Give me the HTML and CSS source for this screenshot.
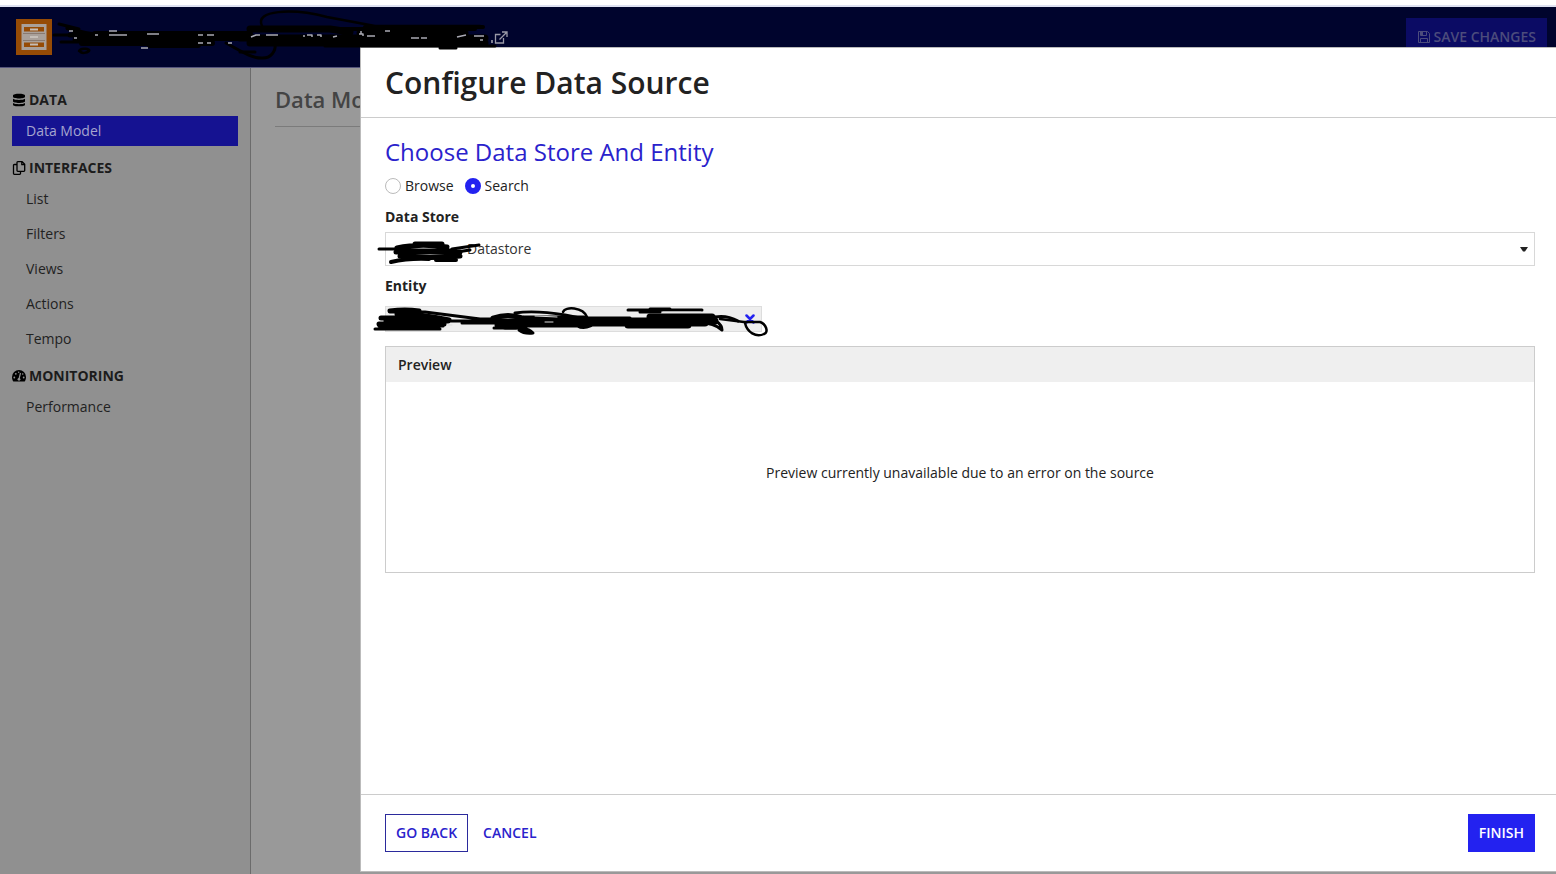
FILE: index.html
```html
<!DOCTYPE html>
<html lang="en">
<head>
<meta charset="utf-8">
<title>Configure Data Source</title>
<link rel="stylesheet" href="styles.css">
</head>
<body>
<div class="page">
  <header class="topbar">
    <svg class="logo" viewBox="0 0 36 36" aria-hidden="true">
      <rect width="36" height="36" fill="#964b05"/>
      <rect x="5.500" y="5" width="25" height="26" fill="#a9a09a"/>
      <path d="M8 8h20v4.500H8zM8 23.500h20V28H8z" fill="#964b05"/>
      <path d="M7 14.500h22M7 21.500h22" stroke="#8a7a70" stroke-width="1"/>
      <path d="M14 10.500h8M14 18h8M14 25.500h8" stroke="#c5beb8" stroke-width="2"/>
    </svg>
    <a class="open-link" href="#" aria-label="Open in new tab">
      <svg viewBox="0 0 14 14" width="14" height="14" fill="none" stroke="currentColor" stroke-width="1.300"><path d="M6.500 4.500H1.500v8.500h8V8M8 2h5v5M13 2L5.500 9.500"/></svg>
    </a>
    <button class="save" type="button">
      <svg viewBox="0 0 12 12" width="12" height="12" fill="none" stroke="currentColor"><path d="M.5.5h9l2 2v9H.5zM2.500.5v4h6v-4M2.500 11.500v-4h7v4"/><path d="M3 1h2v3H3z" fill="currentColor" stroke="none"/></svg>
      SAVE CHANGES
    </button>
  </header>
  <div class="workspace">
    <nav class="sidebar">
      <h2 class="group"><svg viewBox="0 0 14 14" width="14" height="14"><path d="M1 2.500C1 .3 13 .3 13 2.500v1.300C13 6 1 6 1 3.800zM1 5.700c2 1.600 10 1.600 12 0v2.600c0 2.200-12 2.200-12 0zM1 10c2 1.600 10 1.600 12 0v1.700c0 2.200-12 2.200-12 0z"/></svg>DATA</h2>
      <a class="item current" href="#">Data Model</a>
      <h2 class="group"><svg viewBox="0 0 14 14" width="14" height="14" fill="none" stroke="#000" stroke-width="1.300" stroke-linejoin="round"><path d="M5 1.500q0-.8.8-.8h4.400L12.700 3.200v6.300q0 .8-.8.800H5.800q-.8 0-.8-.8zM9.800.9v2.800h2.800M5 3.500H2.300q-.8 0-.8.800v8.200q0 .8.800.8h5.400q.8 0 .8-.8V10.500"/></svg>INTERFACES</h2>
      <a class="item" href="#">List</a>
      <a class="item" href="#">Filters</a>
      <a class="item" href="#">Views</a>
      <a class="item" href="#">Actions</a>
      <a class="item" href="#">Tempo</a>
      <h2 class="group"><svg viewBox="0 0 14 14" width="14" height="14"><path d="M7 1a7 7 0 0 0-7 7c0 1.700.4 3 1.300 4.500h11.400C13.600 11 14 9.700 14 8a7 7 0 0 0-7-7z"/><path d="M8.500 4L7 10" stroke="#909090" stroke-width="1.200"/><g fill="#909090"><circle cx="7" cy="10.300" r="1.400"/><circle cx="2.300" cy="8.500" r=".9"/><circle cx="3.800" cy="4.800" r=".9"/><circle cx="11.700" cy="8.500" r=".9"/><circle cx="10.700" cy="5" r=".8"/><circle cx="6.700" cy="3.200" r=".7"/></g></svg>MONITORING</h2>
      <a class="item" href="#">Performance</a>
    </nav>
    <main class="content"><h1 class="content-title">Data Model</h1></main>
  </div>
</div>

<section class="dialog" role="dialog" aria-labelledby="dialog-title">
  <header class="dialog-head"><h1 id="dialog-title">Configure Data Source</h1></header>
  <form class="dialog-body">
    <h2 class="section-title">Choose Data Store And Entity</h2>
    <div class="radios">
      <label class="radio"><input type="radio" name="mode">Browse</label>
      <label class="radio"><input type="radio" name="mode" checked>Search</label>
    </div>
    <label class="field-label" for="store">Data Store</label>
    <div class="select-wrap">
      <select id="store"><option>Datastore</option></select>
      <svg class="caret" viewBox="0 0 8 5" aria-hidden="true"><path d="M0 0h8L5 4.500H3z" fill="#222"/></svg>
      <svg class="ink store-ink" viewBox="376 238 106 28" aria-hidden="true">
        <path d="M379 249h18" stroke-width="3"/>
        <path d="M415 244h27M397 248q22-5 50-1M396 252h64M400 256q30 3 60 0M405 251h50" stroke-width="5"/>
        <path d="M391 262q18-4 38-3M436 260h20" stroke-width="4"/>
        <path d="M452 249l27-4M450 253l20-3" stroke-width="3"/>
      </svg>
    </div>
    <h3 class="field-label">Entity</h3>
    <div class="token">
      <button class="remove" type="button" aria-label="Remove entity"><svg viewBox="0 0 10 10" width="10" height="10"><path d="M1.500 1.500l7 7M8.500 1.500l-7 7" stroke="#2322f0" stroke-width="2.500" stroke-linecap="round"/></svg></button>
      <svg class="ink entity-ink" viewBox="372 304 398 36" aria-hidden="true">
        <path d="M390 311q15-2 29 0M381 318h58M386 321h62M379 324h65M397 314q25 0 52 6" stroke-width="5"/>
        <path d="M375 329h65M379 326h64" stroke-width="3"/>
        <path d="M400 312h25l55 7h15M448 321h70M462 323h40" stroke-width="3"/>
        <path d="M493 318q15-5 30 0h62M488 321h110M497 325h90M505 327h20M578 325q5 3 12 0" stroke-width="5"/>
        <path d="M515 313q20-3 50 2l25 5M494 328h22M570 318h60" stroke-width="3"/>
        <path d="M519 330q8-3 14 3-9 1-14-3z" fill="#000" stroke-width="3"/>
        <path d="M563 312c2-6 20-5 24 5" stroke-width="2.500"/>
        <path d="M585 321h130M580 323h125M628 325h60M650 317h62" stroke-width="7"/>
        <path d="M628 310h74M650 309h20M640 312h20" stroke-width="3"/>
        <path d="M700 317q8-3 15 0 12-2 23 4M690 324c15-3 26 1 32 6q0-5-6-9" stroke-width="3"/>
        <path d="M720 319l24 3h16c6 2 9 10 4 12-8 4-17-2-19-11" stroke-width="2.500"/>
        <path d="M448 325h4M535 316l22 1M545 322h8M663 312h38" stroke="#ddd" stroke-width="1"/>
      </svg>
    </div>
    <section class="preview">
      <h3 class="preview-head">Preview</h3>
      <p class="preview-body">Preview currently unavailable due to an error on the source</p>
    </section>
  </form>
  <footer class="dialog-foot">
    <button class="btn outline" type="button">GO BACK</button>
    <button class="btn plain" type="button">CANCEL</button>
    <button class="btn solid" type="button">FINISH</button>
  </footer>
</section>

<svg class="ink title-ink" viewBox="52 8 460 52" aria-hidden="true">
  <path d="M59 24l20 5M54 35h24M61 42h25" stroke-width="3"/>
  <path d="M68 28q18 8 40 7M70 35h45M75 40h40" stroke-width="5"/>
  <path d="M79 51c2-4 12-2 10 0s-8 3-9 0" stroke-width="2.500"/>
  <path d="M88 38h165M82 43h130M95 34h155M150 45h48" stroke-width="6"/>
  <path d="M240 38h245M250 29h80l20 3M250 43h235M350 40h130M360 33h105" stroke-width="7"/>
  <path d="M365 27h118M340 29h135" stroke-width="4"/>
  <path d="M262 26c-8-16 30-18 65-9l48 9h105" stroke-width="2.500"/>
  <path d="M226 43c15 8 25 15 35 15 10 1 15-7 14-14" stroke-width="3"/>
  <path d="M240 52h15M325 46h170M440 48h16" stroke-width="3"/>
  <path d="M69 31h4M74 38h3M109 31h8M95 35h3M109 35h18M147 34h12M198 35h5M207 35h7M198 43h5M207 43h4M228 43h4M141 48h7M251 37l5-2h4M266 35h12M304 35v2M307 35h5v2M317 35h4v2M333 37l4-1M359 34h4v2M361 31v3M367 36h8M385 31h5M411 38h8M421 38h6M457 37l9-2M474 36h10M480 40h3M492 40v3" stroke="#a9a9b3" stroke-width="1.500" stroke-linecap="butt"/>
</svg>
</body>
</html>
```
FILE: styles.css
```css
* { box-sizing: border-box; }
body {
  margin: 0;
  font-family: "Open Sans", "Noto Sans", sans-serif;
  font-size: 14px;
  line-height: 20px;
  color: #222;
  background: #999;
}
h1, h2, h3, p { margin: 0; }
button, select { font: inherit; }
button { cursor: pointer; }

.page {
  min-height: 100vh;
  display: flex;
  flex-direction: column;
  border-top: 5px solid #fff;
}
.topbar {
  display: flex;
  align-items: center;
  height: 63px;
  padding: 0 9px 0 16px;
  background: #00042d;
  border-top: 2px solid #dfe2f2;
  border-bottom: 1px solid #55557c;
}
.logo { width: 36px; height: 36px; }
.open-link { display: flex; margin-left: 442px; color: #9a9aa8; }
.save {
  display: flex;
  align-items: center;
  gap: 4px;
  height: 38px;
  margin-left: auto;
  padding: 0 11px 0 12px;
  border: 0;
  background: #0b0b64;
  color: #4c4c7c;
  font-weight: 600;
}
.workspace { display: flex; flex: 1; }
.sidebar {
  width: 251px;
  padding: 20px 12px;
  background: #909090;
  border-right: 1px solid #6b6b6b;
}
.group {
  display: flex;
  align-items: center;
  gap: 3px;
  height: 24px;
  margin-bottom: 4px;
  font-size: 14px;
  font-weight: 700;
  color: #1c1c1c;
}
.item {
  display: flex;
  align-items: center;
  height: 30px;
  margin-bottom: 5px;
  padding-left: 14px;
  color: #222;
  text-decoration: none;
}
.item + .group { margin-top: 10px; }
.item.current { background: #151291; color: #a5a5cf; }
.content { flex: 1; padding: 19px 24px; }
.content-title {
  height: 40px;
  border-bottom: 1px solid #7b7b7b;
  font-size: 22px;
  line-height: 24px;
  font-weight: 600;
  color: #444;
}

.dialog {
  position: fixed;
  top: 47px;
  right: 0;
  bottom: 2px;
  left: 360px;
  display: flex;
  flex-direction: column;
  background: #fff;
  border: 1px solid #bbb;
  border-right: 0;
}
.dialog-head {
  padding: 15px 24px 14px;
  border-bottom: 1px solid #ccc;
}
.dialog-head h1 { font-size: 30px; line-height: 40px; font-weight: 600; }
.dialog-body { flex: 1; padding: 18px 21px 0 24px; }
.section-title {
  font-size: 24px;
  line-height: 32px;
  font-weight: 400;
  color: #2a22cc;
}
.radios { display: flex; gap: 11px; margin: 8px 0 11px; }
.radio { display: flex; align-items: center; gap: 4px; }
.radio input {
  appearance: none;
  width: 16px;
  height: 16px;
  margin: 0;
  border: 1px solid #bbb;
  border-radius: 50%;
  background: #fff;
}
.radio input:checked { border: 6px solid #2322f0; }
.field-label { display: block; font-size: 14px; font-weight: 700; }
.select-wrap { position: relative; margin: 5px 0 10px; }
.select-wrap select {
  display: block;
  appearance: none;
  width: 100%;
  height: 34px;
  padding: 0 24px 0 81px;
  border: 1px solid #d8d8d8;
  border-radius: 0;
  background: #fff;
  color: #333;
}
.caret { position: absolute; right: 7px; top: 15px; width: 8px; height: 5px; }
.token {
  position: relative;
  display: flex;
  justify-content: flex-end;
  align-items: center;
  width: 377px;
  height: 26px;
  margin: 10px 0 14px;
  padding-right: 6px;
  background: #eee;
  border: 1px solid #ddd;
}
.remove { display: flex; padding: 0; border: 0; background: none; }
.preview { border: 1px solid #ccc; }
.preview-head {
  padding: 8px 12px 7px;
  background: #efefef;
  font-size: 14px;
  font-weight: 600;
}
.preview-body { padding: 81px 12px 89px; text-align: center; }
.dialog-foot {
  display: flex;
  align-items: center;
  padding: 19px 21px 19px 24px;
  border-top: 1px solid #ccc;
}
.btn {
  height: 38px;
  padding: 0 10px;
  border: 1px solid #2322f0;
  background: #fff;
  color: #2a22cc;
  font-weight: 600;
}
.btn.outline { border-color: #2b2a9c; }
.btn.plain { margin-left: 4px; border-color: transparent; }
.btn.solid { margin-left: auto; background: #2322f0; color: #fff; }

.ink {
  position: absolute;
  overflow: visible;
  fill: none;
  stroke: #000;
  stroke-linecap: round;
  stroke-linejoin: round;
  pointer-events: none;
}
.store-ink { left: -9px; top: 6px; width: 106px; height: 28px; }
.entity-ink { left: -14px; top: -3px; width: 398px; height: 36px; }
.title-ink { left: 52px; top: 8px; width: 460px; height: 52px; }
```
